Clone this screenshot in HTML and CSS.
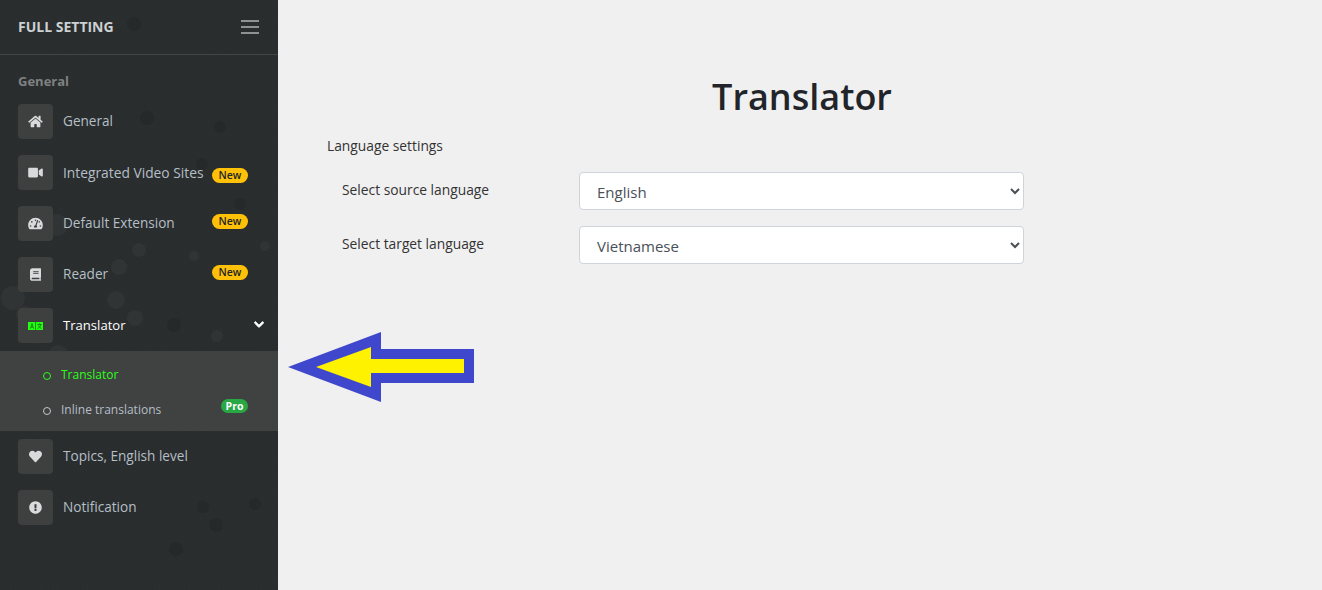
FILE: index.html
```html
<!DOCTYPE html>
<html lang="en">
<head>
<meta charset="utf-8">
<title>Translator</title>
<link rel="stylesheet" href="styles.css">
</head>
<body>
<div class="app">
  <aside class="sidebar">
    <svg class="bokeh" width="278" height="590" viewBox="0 0 278 590" aria-hidden="true">
      <g fill="#26292a">
        <circle cx="134" cy="24" r="7"/><circle cx="147" cy="118" r="7"/><circle cx="220" cy="127" r="6"/>
        <circle cx="202" cy="164" r="6"/><circle cx="240" cy="204" r="6"/>
        <circle cx="174" cy="325" r="7"/><circle cx="203" cy="507" r="6"/><circle cx="216" cy="525" r="7"/>
        <circle cx="255" cy="504" r="6"/><circle cx="176" cy="549" r="7"/>
      </g>
      <g fill="#313435">
        <circle cx="139" cy="250" r="7"/><circle cx="119" cy="267" r="8"/><circle cx="116" cy="300" r="9"/>
        <circle cx="135" cy="318" r="8"/><circle cx="217" cy="336" r="6"/><circle cx="13" cy="298" r="12"/>
        <circle cx="25" cy="315" r="9"/><circle cx="58" cy="355" r="10"/><circle cx="194" cy="256" r="5"/>
        <circle cx="57" cy="225" r="11"/><circle cx="265" cy="246" r="5"/>
      </g>
    </svg>
    <header class="brand">
      <span class="brand-name">FULL SETTING</span>
      <span class="burger"><i></i><i></i><i></i></span>
    </header>
    <nav class="nav">
      <div class="nav-title">General</div>
      <a class="item">
        <span class="ico"><svg width="15" height="13" viewBox="0 0 576 512"><path d="M280.37 148.26L96 300.11V464a16 16 0 0 0 16 16l112.06-.29a16 16 0 0 0 15.92-16V368a16 16 0 0 1 16-16h64a16 16 0 0 1 16 16v95.64a16 16 0 0 0 16 16.05L464 480a16 16 0 0 0 16-16V300L295.67 148.26a12.19 12.19 0 0 0-15.3 0zM571.6 251.47L488 182.56V44.05a12 12 0 0 0-12-12h-56a12 12 0 0 0-12 12v72.61L318.47 43a48 48 0 0 0-61 0L4.34 251.47a12 12 0 0 0-1.6 16.9l25.5 31A12 12 0 0 0 45.15 301l235.22-193.74a12.19 12.19 0 0 1 15.3 0L530.9 301a12 12 0 0 0 16.9-1.6l25.5-31a12 12 0 0 0-1.7-16.93z"/></svg></span>
        <span class="label">General</span>
      </a>
      <a class="item shifted">
        <span class="ico"><svg width="15" height="13" viewBox="0 0 576 512"><path d="M336.2 64H47.8C21.4 64 0 85.4 0 111.8v288.4C0 426.6 21.4 448 47.8 448h288.4c26.4 0 47.8-21.4 47.8-47.8V111.8c0-26.4-21.4-47.8-47.8-47.8zm189.4 37.7L416 177.3v157.4l109.6 75.5c21.2 14.6 50.4-.3 50.4-25.8V127.5c0-25.4-29.1-40.4-50.4-25.8z"/></svg></span>
        <span class="label">Integrated Video Sites</span>
        <span class="badge new low">New</span>
      </a>
      <a class="item">
        <span class="ico"><svg width="15" height="13" viewBox="0 0 576 512"><path d="M288 32C128.94 32 0 160.94 0 320c0 52.8 14.25 102.26 39.06 144.8 5.61 9.62 16.3 15.2 27.44 15.2h443c11.14 0 21.83-5.58 27.44-15.2C561.75 422.26 576 372.8 576 320c0-159.06-128.94-288-288-288zm0 64c14.71 0 26.58 10.13 30.32 23.65-1.11 2.26-2.64 4.23-3.45 6.67l-9.22 27.67c-5.13 3.49-10.97 6.01-17.64 6.01-17.67 0-32-14.33-32-32S270.33 96 288 96zM96 384c-17.67 0-32-14.33-32-32s14.33-32 32-32 32 14.33 32 32-14.33 32-32 32zm48-160c-17.67 0-32-14.33-32-32s14.33-32 32-32 32 14.33 32 32-14.33 32-32 32zm246.77-72.41l-61.33 184C343.13 347.33 352 364.54 352 384c0 11.72-3.38 22.55-8.88 32H232.88c-5.5-9.45-8.88-20.28-8.88-32 0-33.94 26.5-61.43 59.9-63.59l61.34-184.01c4.17-12.56 17.73-19.45 30.36-15.17 12.57 4.19 19.35 17.79 15.17 30.36zm14.66 57.2l15.52-46.55c3.47-1.29 7.13-2.23 11.05-2.23 17.67 0 32 14.33 32 32s-14.33 32-32 32c-11.38-.01-20.89-6.28-26.57-15.22zM480 384c-17.67 0-32-14.33-32-32s14.33-32 32-32 32 14.33 32 32-14.33 32-32 32z"/></svg></span>
        <span class="label">Default Extension</span>
        <span class="badge new">New</span>
      </a>
      <a class="item">
        <span class="ico"><svg width="11" height="13" viewBox="0 0 448 512"><path d="M448 360V24c0-13.3-10.7-24-24-24H96C43 0 0 43 0 96v320c0 53 43 96 96 96h328c13.3 0 24-10.7 24-24v-16c0-7.5-3.5-14.3-8.9-18.7-4.2-15.4-4.2-59.3 0-74.7 5.4-4.3 8.9-11.1 8.9-18.6zM128 134c0-3.3 2.7-6 6-6h212c3.3 0 6 2.7 6 6v20c0 3.3-2.7 6-6 6H134c-3.3 0-6-2.7-6-6v-20zm0 64c0-3.3 2.7-6 6-6h212c3.3 0 6 2.7 6 6v20c0 3.3-2.7 6-6 6H134c-3.3 0-6-2.7-6-6v-20zm253.4 250H96c-17.7 0-32-14.3-32-32 0-17.6 14.4-32 32-32h285.4c-1.9 17.1-1.9 46.9 0 64z"/></svg></span>
        <span class="label">Reader</span>
        <span class="badge new">New</span>
      </a>
      <a class="item open">
        <span class="ico"><svg width="15" height="8" viewBox="0 0 15 8"><rect class="lang-bg" width="15" height="8"/><path class="lang-mark" d="M2.5 6.5 4 1.5 5.5 6.5M3 5h2M7.5 0v8M9.5 2.5h4M11.5 1.5v1M13 2.5c-.5 2-2 3.3-3.5 4M10.3 3.5c.6 1.3 1.8 2.4 3.2 3"/></svg></span>
        <span class="label">Translator</span>
        <svg class="caret" width="10" height="11" viewBox="0 0 448 512"><path d="M207.029 381.476L12.686 187.132c-9.373-9.373-9.373-24.569 0-33.941l22.667-22.667c9.357-9.357 24.522-9.375 33.901-.04L224 284.505l154.745-154.021c9.379-9.335 24.544-9.317 33.901.04l22.667 22.667c9.373 9.373 9.373 24.569 0 33.941L240.971 381.476c-9.373 9.372-24.569 9.372-33.942 0z"/></svg>
      </a>
      <div class="sub">
        <a class="sub-item active"><span class="dot"></span><span class="label">Translator</span></a>
        <a class="sub-item"><span class="dot"></span><span class="label">Inline translations</span><span class="badge pro">Pro</span></a>
      </div>
      <a class="item">
        <span class="ico"><svg width="13" height="13" viewBox="0 0 512 512"><path d="M462.3 62.6C407.5 15.9 326 24.3 275.7 76.2L256 96.5l-19.7-20.3C186.1 24.3 104.5 15.9 49.7 62.6c-62.8 53.6-66.1 149.8-9.9 207.9l193.5 199.8c12.5 12.9 32.8 12.9 45.3 0l193.5-199.8c56.3-58.1 53-154.3-9.8-207.9z"/></svg></span>
        <span class="label">Topics, English level</span>
      </a>
      <a class="item">
        <span class="ico"><svg width="13" height="13" viewBox="0 0 512 512"><path d="M504 256c0 136.997-111.043 248-248 248S8 392.997 8 256C8 119.083 119.043 8 256 8s248 111.083 248 248zm-248 50c-25.405 0-46 20.595-46 46s20.595 46 46 46 46-20.595 46-46-20.595-46-46-46zm-43.673-165.346l7.418 136c.347 6.364 5.609 11.346 11.982 11.346h48.546c6.373 0 11.635-4.982 11.982-11.346l7.418-136c.375-6.874-5.098-12.654-11.982-12.654h-63.383c-6.884 0-12.356 5.78-11.981 12.654z"/></svg></span>
        <span class="label">Notification</span>
      </a>
    </nav>
  </aside>
  <main class="main">
    <h1 class="title">Translator</h1>
    <div class="group-title">Language settings</div>
    <div class="row">
      <label class="row-label">Select source language</label>
      <select class="select"><option>English</option></select>
    </div>
    <div class="row">
      <label class="row-label">Select target language</label>
      <select class="select"><option>Vietnamese</option></select>
    </div>
  </main>
  <svg class="pointer" width="186" height="70" viewBox="0 0 186 70" aria-hidden="true">
    <polygon fill="#3f48cc" points="0,35 93,0 93,17 186,17 186,51 93,51 93,70"/>
    <polygon fill="#fff200" points="28,35 83,15 83,27 176,27 176,41 83,41 83,55"/>
  </svg>
</div>
</body>
</html>
```
FILE: styles.css
```css
* { box-sizing: border-box; }
html, body { margin: 0; height: 100%; overflow: hidden; }
body { font-family: "Open Sans", "Noto Sans", "Liberation Sans", sans-serif; background: #f0f0f0; color: #212529; }
.app { display: flex; height: 590px; position: relative; }

.sidebar {
  position: relative;
  width: 278px;
  flex: none;
  background-color: #2b2e2f;
  background-image: repeating-linear-gradient(45deg, rgba(0,0,0,.05) 0 1px, transparent 1px 3px);
  color: #b4bfc6;
}
.bokeh { position: absolute; left: 0; top: 0; }
.brand {
  position: relative;
  height: 55px;
  display: flex;
  align-items: center;
  justify-content: space-between;
  padding: 0 19px 1px 18px;
  border-bottom: 1px solid #444645;
}
.brand-name { font-size: 14px; font-weight: 700; color: #ccd1d4; }
.burger { display: flex; flex-direction: column; gap: 4px; width: 18px; }
.burger i { display: block; height: 2px; background: #8f9192; }

.nav { position: relative; }
.nav-title { height: 49px; padding: 17px 18px 0; font-size: 13px; line-height: 19px; font-weight: 700; color: #7f8183; }
.item { display: flex; align-items: center; height: 35px; margin-bottom: 16px; padding: 0 18px; font-size: 13.6px; }
.item > .label { margin-top: -2px; }
.item.shifted > .label { margin-top: 0; font-size: 13.8px; }
.item.open { margin-bottom: 8px; color: #fff; font-size: 13.1px; }
.ico { display: flex; align-items: center; justify-content: center; width: 35px; height: 35px; margin-right: 10px; border-radius: 4px; background: #3e3f3f; }
.ico svg { fill: #d8dadb; display: block; }
.lang-bg { fill: #1fff0e; }
.lang-mark { fill: none; stroke: #166a10; stroke-width: .8; }
.label { white-space: nowrap; }
.caret { margin-left: auto; margin-right: -4px; margin-top: -2px; fill: #fff; stroke: #fff; stroke-width: 40; }

.badge { margin-left: auto; margin-right: 12px; margin-top: -4px; font-size: 10.5px; line-height: 15px; height: 15px; border-radius: 8px; font-weight: 600; text-align: center; }
.badge.new { width: 36px; background: #ffc107; color: #212529; }
.badge.new.low { margin-top: 6px; }
.badge.pro { width: 27px; height: 14px; line-height: 14px; background: #28a745; color: #fff; font-weight: 700; margin-top: -8px; }

.sub { background: #404141; padding: 6px 0 4px; margin-bottom: 8px; position: relative; }
.sub-item { display: flex; align-items: center; height: 35px; padding-left: 43px; padding-right: 18px; font-size: 12px; color: #b4bfc6; }
.dot { width: 8px; height: 8px; border: 1.3px solid #c4c8ca; border-radius: 50%; margin-right: 10px; margin-top: 2px; flex: none; }
.sub-item.active { color: #2bff1a; }
.sub-item.active .dot { border-color: #2bff1a; }

.main { flex: 1; padding: 0 298px 0 49px; color: #333; }
.title { margin: 70px -253px 0 0; font-size: 36px; line-height: 54px; font-weight: 600; text-align: center; color: #212529; }
.group-title { margin-top: 12px; font-size: 13.8px; line-height: 20px; }
.row { display: flex; align-items: center; padding-left: 15px; margin-bottom: 16px; }
.group-title + .row { margin-top: 16px; }
.row-label { width: 237px; flex: none; font-size: 13.8px; line-height: 20px; margin-top: -2px; }
.select {
  width: 445px;
  height: 38px;
  padding: 7px 12px 5px 13px;
  font: 400 15px "Open Sans", "Noto Sans", sans-serif;
  color: #495057;
  background: #fff;
  border: 1px solid #ced4da;
  border-radius: 4px;
}

.pointer { position: absolute; left: 288px; top: 332px; }
```
